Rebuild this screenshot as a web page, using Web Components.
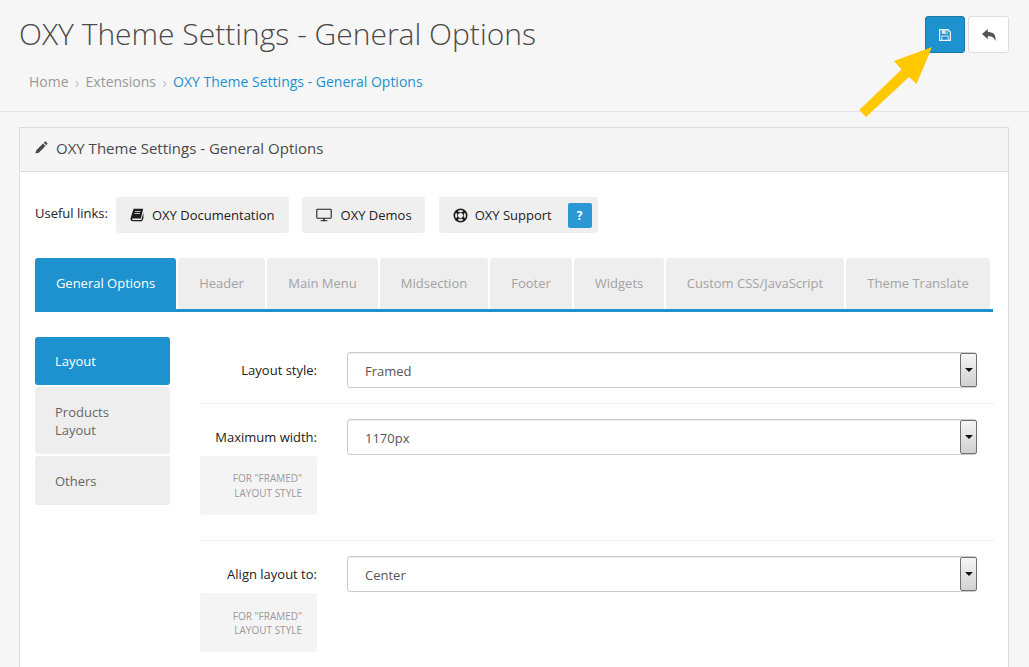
<!DOCTYPE html>
<html>
<head>
<meta charset="utf-8">
<title>OXY Theme Settings</title>
<style>
  html, body { margin: 0; padding: 0; height: 667px; overflow: hidden; background: #f6f6f6; }
  body { font-family: "Open Sans", sans-serif; font-size: 13px; color: #333; position: relative; }
</style>
</head>
<body>
<oxy-page-header title="OXY Theme Settings - General Options"></oxy-page-header>
<oxy-panel heading="OXY Theme Settings - General Options">
  <oxy-links>
    <oxy-link icon="book">OXY Documentation</oxy-link>
    <oxy-link icon="desktop">OXY Demos</oxy-link>
    <oxy-link icon="support" help>OXY Support</oxy-link>
  </oxy-links>
  <oxy-tabs>
    <oxy-tab active w="141">General Options</oxy-tab>
    <oxy-tab w="87">Header</oxy-tab>
    <oxy-tab w="111">Main Menu</oxy-tab>
    <oxy-tab w="108">Midsection</oxy-tab>
    <oxy-tab w="82">Footer</oxy-tab>
    <oxy-tab w="90">Widgets</oxy-tab>
    <oxy-tab w="178">Custom CSS/JavaScript</oxy-tab>
    <oxy-tab w="144">Theme Translate</oxy-tab>
  </oxy-tabs>
  <oxy-settings>
    <oxy-side-item slot="side" active>Layout</oxy-side-item>
    <oxy-side-item slot="side">Products<br>Layout</oxy-side-item>
    <oxy-side-item slot="side">Others</oxy-side-item>
    <oxy-row label="Layout style:" value="Framed"></oxy-row>
    <oxy-row label="Maximum width:" value="1170px" note></oxy-row>
    <oxy-row label="Align layout to:" value="Center" note></oxy-row>
  </oxy-settings>
</oxy-panel>
<oxy-arrow></oxy-arrow>

<script>
const ICONS = {
  book: '<svg width="14" height="14" viewBox="0 0 14 14"><path fill="#1d1d1d" d="M3.6 0.8H13.2L10.9 10.4H3C2.2 10.4 1.9 11 2.3 11.5C2.6 11.9 3 12 3.5 12H11.4L12.5 7.8L13.4 4.4V10.4L11.9 13.3H3C1.6 13.3.6 12.3.5 11C.5 10.6.6 10.2.7 9.8Z"/><path fill="#efefef" d="M5 3.2H10.4V3.9H4.8ZM4.5 5H10V5.7H4.3Z"/></svg>',
  desktop: '<svg width="17" height="14" viewBox="0 0 17 14"><path fill="none" stroke="#222" stroke-width="1.1" d="M1.4 1.2H14.6C15 1.2 15.2 1.4 15.2 1.8V9.6C15.2 10 15 10.2 14.6 10.2H1.4C1 10.2.8 10 .8 9.6V1.8C.8 1.4 1 1.2 1.4 1.2Z"/><path fill="#222" d="M7.2 10.2H8.8V12.4H7.2ZM4.6 12.2H11.4V13.2H4.6Z"/></svg>',
  support: '<svg width="15" height="15" viewBox="0 0 15 15"><circle cx="7.5" cy="7.5" r="6.2" fill="none" stroke="#1d1d1d" stroke-width="1.6"/><circle cx="7.5" cy="7.5" r="3.1" fill="none" stroke="#1d1d1d" stroke-width="1"/><path stroke="#1d1d1d" stroke-width="2.6" d="M2.8 2.8L5.4 5.4M12.2 2.8L9.6 5.4M2.8 12.2L5.4 9.6M12.2 12.2L9.6 9.6"/></svg>'
};

class OxyPageHeader extends HTMLElement {
  connectedCallback() {
    const title = this.getAttribute('title');
    this.removeAttribute('title');
    this.attachShadow({ mode: 'open' }).innerHTML = `
      <style>
        :host { display: flex; justify-content: space-between; box-sizing: border-box; height: 112px;
                padding: 15px 20px 0 19px; border-bottom: 1px solid #e5e5e5; }
        h1 { margin: 0; font-size: 30px; font-weight: 300; line-height: 38px; color: #4a4a4a; }
        nav { margin-top: 19px; padding-left: 10px; font-size: 14px; line-height: 20px; color: #999; display: flex; }
        nav i { font-style: normal; font-size: 14px; line-height: 22px; width: 17px; text-align: center; color: #bbb; }
        nav a { color: #1e91cf; }
        .btns { display: flex; gap: 3px; padding-top: 1px; }
        .btn { box-sizing: border-box; width: 41px; height: 37px; border-radius: 3px; display: flex;
               align-items: center; justify-content: center; }
        .save { width: 40px; background: #1e91cf; border: 1px solid #1978ab; }
        .back { background: #fff; border: 1px solid #ddd; }
      </style>
      <div>
        <h1>${title}</h1>
        <nav><span>Home</span><i>›</i><span>Extensions</span><i>›</i><a>${title}</a></nav>
      </div>
      <div class="btns">
        <div class="btn save"><svg width="12" height="12" viewBox="0 0 12 12"><path fill="none" stroke="#f2f9fd" stroke-width="1.2" d="M.6.6H9L11.400 3V11.400H.6Z"/><path fill="#dcedf8" d="M2.800 1H8.600V4.800H2.800Z"/><path fill="#1e91cf" d="M6.500 1.500H7.800V3.900H6.500Z"/><path fill="none" stroke="#dcedf8" d="M2.800 11V7H9.200V11"/></svg></div>
        <div class="btn back"><svg width="14" height="12" viewBox="0 0 14 12"><path fill="#555" d="M5.800 0V3C10.400 3 13.600 4.900 13.600 10C13.600 10.800 13.400 11.500 13.100 12C12.800 8.600 10 7 5.800 7.200V10.200L0 5.100Z"/></svg></div>
      </div>`;
  }
}
customElements.define('oxy-page-header', OxyPageHeader);

class OxyPanel extends HTMLElement {
  connectedCallback() {
    this.attachShadow({ mode: 'open' }).innerHTML = `
      <style>
        :host { display: block; margin: 15px 20px 0 19px; border: 1px solid #ddd; border-bottom: 0; background: #fff; }
        header { box-sizing: border-box; height: 44px; background: #f5f5f5; border-bottom: 1px solid #ddd;
                 display: flex; align-items: center; gap: 8px; padding: 0 0 4px 15px; font-size: 15px; color: #4a4a4a; }
        .body { padding: 25px 15px 0 15px; }
      </style>
      <header>
        <svg width="13" height="13" viewBox="0 0 13 13"><path fill="#4a4a4a" d="M9.700.8C10.100.4 10.700.4 11.100.8L12.200 1.900C12.600 2.300 12.600 2.900 12.200 3.300L11.200 4.300 8.700 1.800ZM8 2.500L10.500 5L3.800 11.700L.4 12.600L1.300 9.200Z"/></svg>
        <span>${this.getAttribute('heading')}</span>
      </header>
      <div class="body"><slot></slot></div>`;
  }
}
customElements.define('oxy-panel', OxyPanel);

class OxyLinks extends HTMLElement {
  constructor() {
    super();
    this.attachShadow({ mode: 'open' }).innerHTML = `
      <style>
        :host { display: flex; height: 36px; align-items: flex-start; gap: 13px; }
        span { font-size: 13px; line-height: 18px; color: #222; margin-top: 7px; margin-right: -5px; }
      </style>
      <span>Useful links:</span><slot></slot>`;
  }
}
customElements.define('oxy-links', OxyLinks);

class OxyLink extends HTMLElement {
  connectedCallback() {
    const help = this.hasAttribute('help');
    const desktop = this.getAttribute('icon') === 'desktop';
    this.attachShadow({ mode: 'open' }).innerHTML = `
      <style>
        :host { display: flex; align-items: center; box-sizing: border-box; height: 36px; background: #efefef;
                border-radius: 3px; padding: 0 ${help ? 6 : desktop ? 13 : 14}px 0 14px; color: #222; font-size: 13px;
                gap: ${help ? 7 : 8}px; margin-left: ${help ? 1 : 0}px; }
        svg { display: block; }
        .help { width: 24px; height: 25px; margin-left: 9px; background: #2b97d5; border-radius: 2px; color: #fff;
                font-weight: 700; font-size: 12px; display: flex; align-items: center; justify-content: center; }
      </style>
      ${ICONS[this.getAttribute('icon')]}<span><slot></slot></span>${help ? '<div class="help">?</div>' : ''}`;
  }
}
customElements.define('oxy-link', OxyLink);

class OxyTabs extends HTMLElement {
  constructor() {
    super();
    this.attachShadow({ mode: 'open' }).innerHTML = `
      <style>
        :host { display: flex; gap: 2px; margin-top: 25px; border-bottom: 3px solid #1e91cf; height: 51px; }
      </style>
      <slot></slot>`;
  }
}
customElements.define('oxy-tabs', OxyTabs);

class OxyTab extends HTMLElement {
  connectedCallback() {
    const active = this.hasAttribute('active');
    this.attachShadow({ mode: 'open' }).innerHTML = `
      <style>
        :host { display: flex; align-items: center; justify-content: center; box-sizing: border-box;
                width: ${this.getAttribute('w')}px; height: 51px; padding-bottom: 2px; border-radius: 3px 3px 0 0; font-size: 13px;
                background: ${active ? '#1e91cf' : '#eee'}; color: ${active ? '#fff' : '#a3a3a3'}; }
      </style>
      <slot></slot>`;
  }
}
customElements.define('oxy-tab', OxyTab);

class OxySettings extends HTMLElement {
  constructor() {
    super();
    this.attachShadow({ mode: 'open' }).innerHTML = `
      <style>
        :host { display: grid; grid-template-columns: 135px 1fr; column-gap: 30px; margin-top: 25px; }
        .side { display: flex; flex-direction: column; gap: 2px; }
      </style>
      <div class="side"><slot name="side"></slot></div>
      <div class="rows"><slot></slot></div>`;
  }
}
customElements.define('oxy-settings', OxySettings);

class OxySideItem extends HTMLElement {
  connectedCallback() {
    const active = this.hasAttribute('active');
    this.attachShadow({ mode: 'open' }).innerHTML = `
      <style>
        :host { display: block; padding: ${active ? 15 : 16}px 20px 15px; border-radius: 3px; font-size: 13px; line-height: 18px;
                background: ${active ? '#1e91cf' : '#eee'}; color: ${active ? '#fff' : '#666'}; }
      </style>
      <slot></slot>`;
  }
}
customElements.define('oxy-side-item', OxySideItem);

class OxyRow extends HTMLElement {
  connectedCallback() {
    const note = this.hasAttribute('note');
    this.attachShadow({ mode: 'open' }).innerHTML = `
      <style>
        :host { display: grid; grid-template-columns: 117px 630px; column-gap: 30px; padding: 15px 0 15px;
                border-bottom: 1px dotted #e4e4e4; }
        :host(:last-child) { border-bottom: 0; }
        label { display: block; text-align: right; font-size: 13px; line-height: 18px; color: #222; padding-top: 9px; }
        .note { box-sizing: border-box; height: 59px; margin-top: 1px; padding: 15px 15px 0 0; background: #f4f4f4;
                border-radius: 3px; text-align: right; font-size: 10px; line-height: 15px; color: #999; }
        :host(:last-child) .note { padding-top: 16px; line-height: 14px; }
        .left { display: flex; flex-direction: column; }
        .label-box { height: 36px; }
        :host([note]) { padding-bottom: 25px; }
      </style>
      <div class="left">
        <div class="label-box"><label>${this.getAttribute('label')}</label></div>
        ${note ? '<div class="note">FOR "FRAMED"<br>LAYOUT STYLE</div>' : ''}
      </div>
      <div><oxy-select value="${this.getAttribute('value')}"></oxy-select></div>`;
  }
}
customElements.define('oxy-row', OxyRow);

class OxySelect extends HTMLElement {
  connectedCallback() {
    this.attachShadow({ mode: 'open' }).innerHTML = `
      <style>
        :host { display: flex; box-sizing: border-box; height: 36px; background: #fff; border: 1px solid #ccc;
                border-radius: 3px; box-shadow: inset 0 1px 1px rgba(0,0,0,.075); }
        .v { flex: 1; padding-left: 17px; font-size: 13px; line-height: 36px; color: #555; }
        .arrow { box-sizing: border-box; width: 17px; height: 34px; margin-right: -1px; border: 1px solid #707070;
                 border-radius: 2px; background: linear-gradient(#f6f6f6, #d0d0d0); display: flex;
                 align-items: center; justify-content: center; }
        .arrow::after { content: ""; border: 4px solid transparent; border-top: 4px solid #111; margin-top: 4px; }
      </style>
      <div class="v">${this.getAttribute('value')}</div><div class="arrow"></div>`;
  }
}
customElements.define('oxy-select', OxySelect);

class OxyArrow extends HTMLElement {
  constructor() {
    super();
    this.attachShadow({ mode: 'open' }).innerHTML = `
      <style>
        :host { position: absolute; left: 855px; top: 42px; width: 80px; height: 80px; }
      </style>
      <svg width="80" height="80" viewBox="855 42 80 80">
        <polygon fill="#ffc800" points="932,47 916.5,84 909,77 866,117 859.300,110 901.500,69.500 894,61"/>
      </svg>`;
  }
}
customElements.define('oxy-arrow', OxyArrow);
</script>
</body>
</html>
